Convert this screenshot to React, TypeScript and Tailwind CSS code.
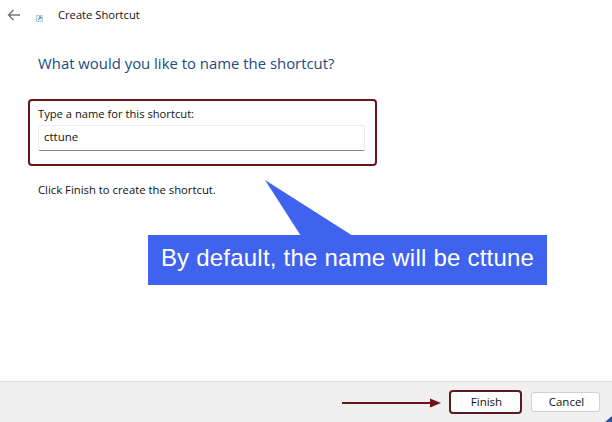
export default function App() {
  return (
    <div className="relative flex h-[422px] w-[612px] flex-col overflow-hidden bg-white text-[#111] [font-family:'Open_Sans','Noto_Sans',sans-serif]">
      <header className="flex h-[30px] items-center">
        <svg width="14" height="12" viewBox="0 0 14 12" className="ml-[7px]" fill="none" stroke="#777" strokeWidth="1.4">
          <path d="M13 6H1.5M6.5 1 1.5 6l5 5" />
        </svg>
        <svg width="7" height="7" viewBox="0 0 7 7" className="ml-[15px] mt-[6px]">
          <rect x="0.5" y="0.5" width="6" height="6" fill="#eef4f8" stroke="#b9cdd8" />
          <path d="M2 5 5 2M3 2h2v2" stroke="#3a7ca5" fill="none" />
        </svg>
        <span className="ml-[15px] text-[11.2px] leading-none">Create Shortcut</span>
      </header>

      <main className="flex flex-1 flex-col pl-[28px]">
        <h1 className="ml-[10px] mt-[23px] text-[14.9px] leading-[20px] text-[#1d4a80]">What would you like to name the shortcut?</h1>
        <div className="mt-[26px] flex h-[67px] w-[349px] flex-col rounded-[4px] border-2 border-[#6b1518] pl-[8px] pr-[10px] pt-[5px]">
          <label className="text-[11.2px] leading-[16px]">Type a name for this shortcut:</label>
          <div className="mt-[3px] flex h-[26px] items-center rounded-[2px] border border-[#ececec] border-b-[#888] bg-white px-[5px] pb-[3px] text-[11.5px]">cttune</div>
        </div>
        <p className="ml-[10px] mt-[16px] text-[11.3px] leading-[16px]">Click Finish to create the shortcut.</p>
      </main>

      <footer className="flex h-[41px] items-center justify-end border-t border-[#dfdfdf] bg-[#f0f0f0] pr-[12px]">
        <button className="mr-[9px] h-[24px] w-[73px] rounded-[4px] border-2 border-[#5c1a22] bg-white pl-[2px] text-[11.5px]">Finish</button>
        <button className="h-[20px] w-[69px] rounded-[3px] border border-[#d0d0d0] bg-white pl-[2px] text-[11.5px]">Cancel</button>
      </footer>

      <svg className="absolute left-[264px] top-[180px]" width="90" height="56" viewBox="0 0 90 56">
        <path d="M1 0 37 56H89Z" fill="#3f63ee" />
      </svg>
      <div className="absolute left-[148px] top-[235px] flex h-[50px] w-[399px] items-center justify-center bg-[#3f63ee] pb-[4px] text-[24px] tracking-[0.22px] text-white [font-family:'Liberation_Sans',sans-serif]">
        By default, the name will be cttune
      </div>
      <svg className="absolute left-[342px] top-[397px]" width="100" height="12" viewBox="0 0 100 12">
        <path d="M0 6H90" stroke="#6b1518" strokeWidth="2" />
        <path d="M88 1.5 99 6 88 10.5Z" fill="#6b1518" />
      </svg>
      <svg className="absolute bottom-0 right-0" width="7" height="6" viewBox="0 0 7 6">
        <path d="M7 0V6H0Z" fill="#2f4f9f" />
      </svg>
    </div>
  );
}
